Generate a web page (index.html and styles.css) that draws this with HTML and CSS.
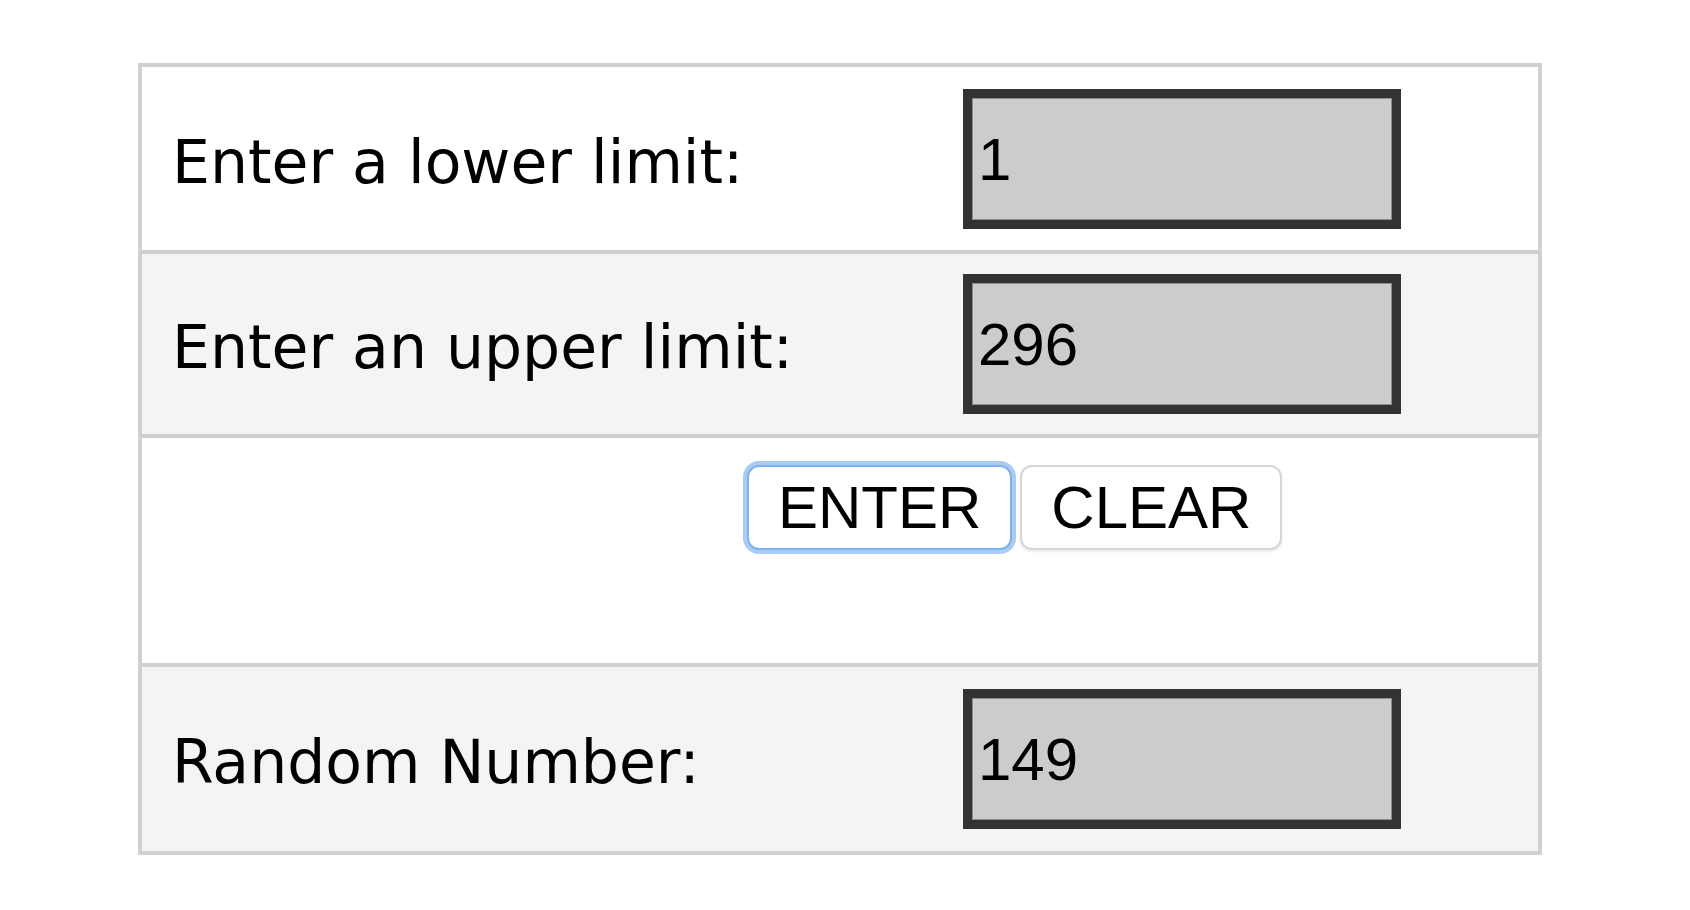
FILE: index.html
```html
<!DOCTYPE html>
<html lang="en">
  <head>
    <meta charset="UTF-8" />
    <meta name="viewport" content="width=device-width, initial-scale=1.0" />
    <title>Random Number</title>
    <link rel="stylesheet" href="styles.css">
  </head>
  <body>
    <form class="calc">
      <div class="row row-first">
        <label class="label" for="lower">Enter a lower limit:</label>
        <div class="field"><input class="box" id="lower" type="text" value="1"></div>
      </div>
      <div class="row row-alt row-mid">
        <label class="label" for="upper">Enter an upper limit:</label>
        <div class="field"><input class="box" id="upper" type="text" value="296"></div>
      </div>
      <div class="actions">
        <button type="button" class="btn btn-focus">ENTER</button>
        <button type="reset" class="btn">CLEAR</button>
      </div>
      <div class="row row-alt">
        <label class="label" for="result">Random Number:</label>
        <div class="field"><input class="box" id="result" type="text" value="149" readonly></div>
      </div>
    </form>
  </body>
</html>
```

FILE: styles.css
```css
* {
  margin: 0;
  padding: 0;
  box-sizing: border-box;
}

body {
  background: #fff;
  font-family: "DejaVu Sans", Verdana, sans-serif;
  color: #000;
}

.calc {
  width: 1404px;
  margin: 63px 0 0 138px;
  border: 4px solid #d0d0d0;
}

.row {
  display: grid;
  grid-template-columns: 821px 1fr;
  align-items: center;
  padding: 22px 0;
  background: #fff;
}

.row-first {
  padding: 22px 0 21px;
}

.row-mid {
  padding: 20px 0;
}

.row-alt {
  background: #f4f4f4;
}

.calc > * + * {
  border-top: 4px solid #d0d0d0;
}

.label {
  padding: 5px 0 0 30px;
  font-size: 60px;
}

.box {
  display: block;
  width: 438px;
  height: 140px;
  padding: 0 6px;
  border: 9px solid #333;
  background: #ccc;
  box-shadow: inset 0 0 0 1px #8c8c8c;
  font-family: "Liberation Sans", Arial, sans-serif;
  font-size: 60px;
  color: #000;
  outline: none;
}

/* fila de botones, con hueco extra debajo */
.actions {
  display: flex;
  align-items: flex-start;
  gap: 8px;
  height: 229px;
  padding: 27px 0 0 605px;
  background: #fff;
}

.btn {
  height: 85px;
  padding: 0 29px;
  border: 2px solid #d6d6d6;
  border-radius: 12px;
  background: #fff;
  box-shadow: 0 2px 2px rgba(0, 0, 0, 0.08);
  font-family: "Liberation Sans", Arial, sans-serif;
  font-size: 60px;
  line-height: 1;
  color: #000;
}

.btn-focus {
  border-color: #80b2ee;
  box-shadow: 0 0 0 4px #a8ccf4;
}
```
